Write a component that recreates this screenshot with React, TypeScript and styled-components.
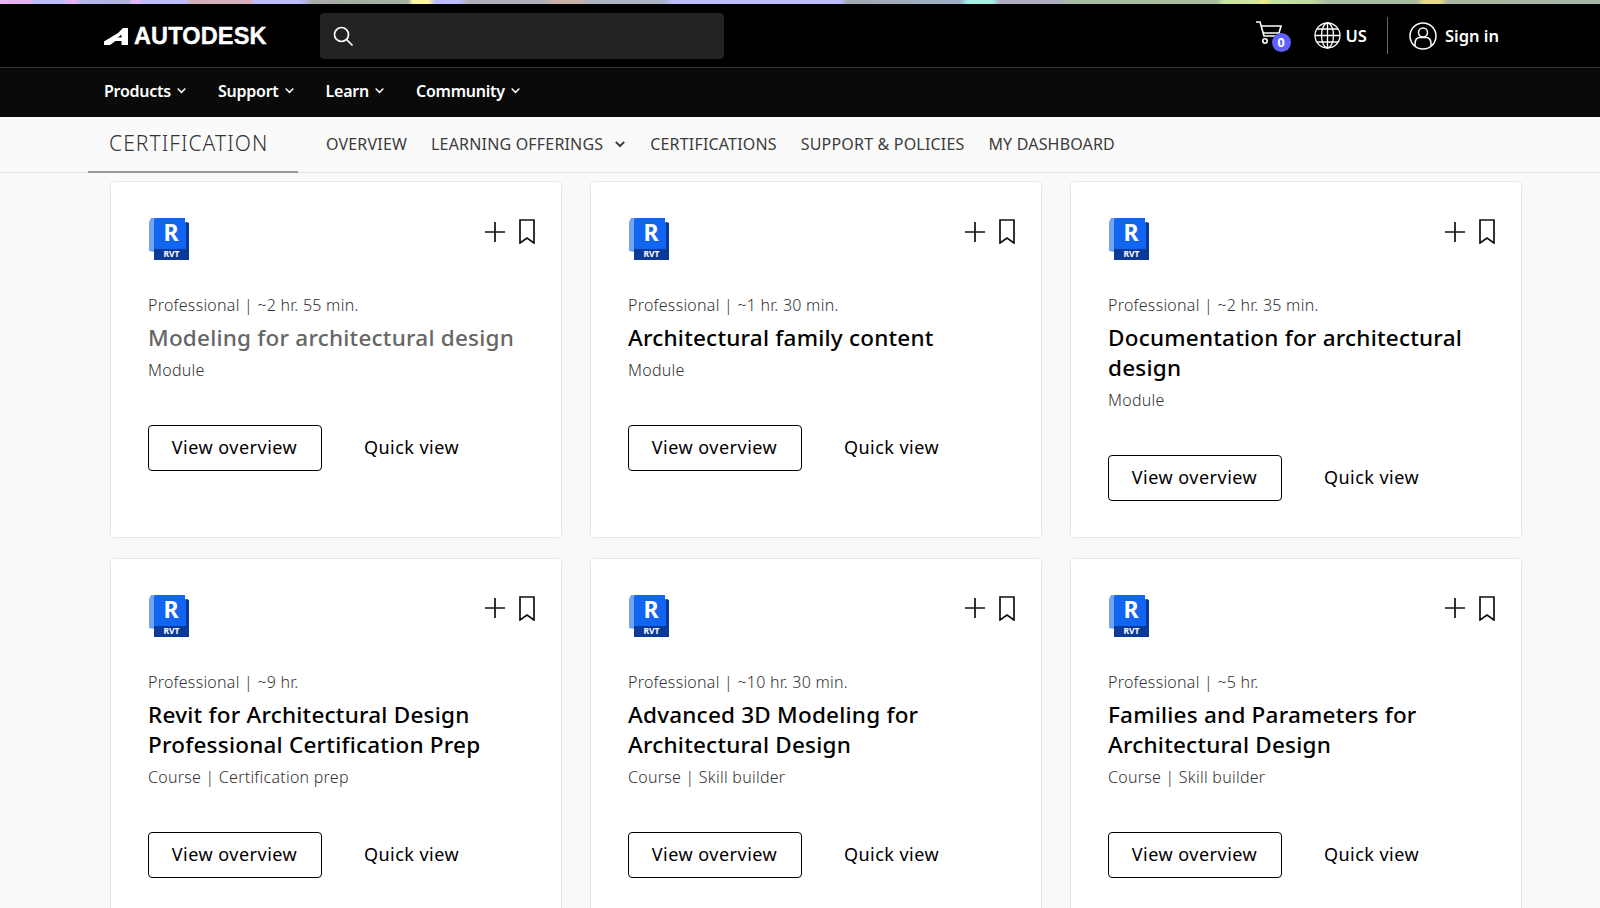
import React from "react";
import styled, { createGlobalStyle } from "styled-components";

const Global = createGlobalStyle`
  html, body { margin: 0; padding: 0; height: 908px; overflow: hidden; background: #f9f9f9; }
  body { font-family: "Noto Sans", "Liberation Sans", sans-serif; color: #000; }
  * { box-sizing: border-box; }
`;

const Strip = styled.div`
  height: 4px;
  background: linear-gradient(90deg,
    #e8b4f4 0%, #e4b4f6 1.9%, #bcbcff 2.2%, #bcbcff 4%, #e0b4f6 4.2%, #e0b4f6 4.8%,
    #b8b6ee 5.1%, #b4b2e0 8%, #e0b8f8 8.3%, #e0b8f8 8.6%, #c0bcff 9%, #c0bcff 11.5%,
    #d4b0b8 12%, #d8b0c0 15.6%, #bcbcff 16%, #bcbcff 18.8%, #a8aca8 19.5%, #a4b0a0 25.5%,
    #fff4a0 25.8%, #fff4a0 26.8%, #bcbcff 27.2%, #bcbcff 28.7%, #aeb0b8 29.2%, #aeb0b8 34%,
    #c8b0a8 34.4%, #c8b0a8 36%, #b0b4c0 37%, #a8b4c8 41.5%, #bcbcff 42%, #bcbcff 52.5%,
    #a4a8b0 53%, #9cb0c8 60%, #a8f0e4 60.5%, #a8f0e4 62%, #acaec0 62.5%, #acaec0 66%,
    #a8bca0 67%, #a8bc9c 76%, #c4e4a0 76.5%, #d8e898 78.7%, #f8e880 79%, #c4e4a0 79.5%,
    #c0d8a0 82%, #a8bca0 83%, #a8bca0 88.5%, #e8d888 89%, #e8d888 90%, #a8b8a0 90.5%, #a8b8a8 100%);
`;
const TopBar = styled.header`
  height: 64px;
  background: #000;
  border-bottom: 1px solid #333;
  display: flex;
  align-items: center;
  padding: 0 101px 0 104px;
`;
const Logo = styled.div`
  display: flex;
  align-items: center;
  gap: 6px;
  width: 216px;
  padding-top: 1px;
  color: #fff;
  font-family: "Liberation Sans", sans-serif;
  font-weight: 700;
  font-size: 23.5px;
  letter-spacing: 0.15px;
  -webkit-text-stroke: 0.4px #fff;
`;
const Search = styled.div`
  width: 404px;
  height: 46px;
  background: #222;
  border-radius: 4px;
  display: flex;
  align-items: center;
  padding-left: 12px;
`;
const Tools = styled.div`
  margin-left: auto;
  display: flex;
  align-items: center;
  color: #fff;
  font-weight: 600;
  font-size: 16.5px;
`;
const CartWrap = styled.div`
  position: relative;
  width: 36px;
  height: 32px;
  margin-right: 23px;
`;
const Badge = styled.span`
  position: absolute;
  right: 0;
  bottom: 0;
  width: 19px;
  height: 19px;
  border-radius: 50%;
  background: #5f60ff;
  color: #fff;
  font-size: 12.5px;
  font-weight: 700;
  line-height: 19px;
  text-align: center;
`;
const ToolItem = styled.div`
  display: flex;
  align-items: center;
  gap: 5px;
`;
const Divider = styled.div`
  width: 1px;
  height: 37px;
  background: #666;
  margin: 0 21px 0 20px;
`;
const SignIn = styled.span`
  margin-left: 3px;
`;
const MainNav = styled.nav`
  height: 49px;
  background: #0a0a0a;
  display: flex;
  align-items: center;
  gap: 31px;
  padding: 0 0 4px 104px;
  color: #fff;
  font-size: 16px;
  font-weight: 600;
`;
const NavItem = styled.div`
  display: flex;
  align-items: center;
  gap: 5px;
  letter-spacing: -0.25px;
`;
const SubNav = styled.nav`
  height: 56px;
  background: #fafafa;
  border-bottom: 1px solid #e3e3e3;
  display: flex;
  align-items: stretch;
  padding-left: 88px;
`;
const Brand = styled.div`
  width: 210px;
  height: 56px;
  border-bottom: 2px solid #999;
  display: flex;
  align-items: center;
  padding: 0 0 2px 21px;
  font-size: 21px;
  font-weight: 300;
  letter-spacing: 1.05px;
  color: #333;
`;
const SubLinks = styled.div`
  display: flex;
  align-items: center;
  gap: 24px;
  padding: 0 0 2px 28px;
  font-size: 16px;
  color: #3c3c3c;
`;
const SubLink = styled.span`
  display: flex;
  align-items: center;
  gap: 11px;
  letter-spacing: 0.18px;
`;
const Grid = styled.main`
  display: grid;
  grid-template-columns: repeat(3, 452px);
  column-gap: 28px;
  row-gap: 19.5px;
  padding: 8px 0 0 110px;
`;
const Card = styled.article`
  background: #fff;
  border: 1px solid #e6e6e6;
  border-radius: 4px;
  padding: 36px 26px 36px 37px;
`;
const CardTop = styled.div`
  display: flex;
  justify-content: space-between;
  align-items: flex-start;
  height: 42px;
  margin-bottom: 33px;
`;
const IconSlot = styled.div`
  margin-left: 1px;
  height: 42px;
  svg { display: block; overflow: visible; }
`;
const Actions = styled.div`
  display: flex;
  align-items: center;
  gap: 13px;
  padding-top: 1px;
`;
const Meta = styled.div`
  font-size: 16px;
  line-height: 24px;
  font-weight: 300;
  letter-spacing: 0.25px;
  color: #333;
`;
const Title = styled.h3<{ $muted?: boolean }>`
  margin: 6px 0 5px;
  font-size: 22.5px;
  line-height: 30px;
  font-weight: 500;
  letter-spacing: 0.22px;
  color: ${(p) => (p.$muted ? "#666" : "#000")};
`;
const ButtonRow = styled.div`
  display: flex;
  align-items: center;
  gap: 42.5px;
  margin: 43px 0 0 -0.5px;
`;
const Outline = styled.button`
  width: 174px;
  height: 46px;
  background: #fff;
  border: 1px solid #000;
  border-radius: 4px;
  font: 400 18px "Noto Sans", sans-serif;
  letter-spacing: 0.5px;
  color: #000;
  padding: 0 0 2px;
`;
const Quick = styled.span`
  font-size: 18px;
  letter-spacing: 0.45px;
  padding-bottom: 2px;
  color: #000;
`;

const Chevron = ({ size = 11, w = 1.3 }: { size?: number; w?: number }) => (
  <svg width={size} height={size} viewBox="0 0 10 10" fill="none" stroke="currentColor" strokeWidth={w}>
    <path d="M1.500 3.200l3.500 3.500 3.500-3.500" />
  </svg>
);

const RvtIcon = () => (
  <svg width="41" height="42" viewBox="0 0 41 42">
    <path d="M8 0H2L0 4v29l5 1V4z" fill="#73a5ef" />
    <path d="M5 2Q5 0 7 0h29v4l4 1v37H5v-9z" fill="#1265f2" />
    <path d="M37 4l3 1v37H6q-1 0-1-1v-10h32z" fill="#0b3a9a" />
    <text x="22" y="23" textAnchor="middle" fontFamily="Noto Sans" fontWeight="700" fontSize="23" fill="#fff">R</text>
    <text x="22.500" y="38.500" textAnchor="middle" fontFamily="Noto Sans" fontWeight="700" fontSize="8.500" fill="#fff">RVT</text>
  </svg>
);

const PlusIcon = () => (
  <svg width="22" height="22" viewBox="0 0 22 22" stroke="#111" strokeWidth="1.7">
    <path d="M1 11h20M11 1v20" />
  </svg>
);
const BookmarkIcon = () => (
  <svg width="16" height="25" viewBox="0 0 16 25" fill="none" stroke="#111" strokeWidth="1.7">
    <path d="M1 1h14v23l-7-5-7 5z" />
  </svg>
);

const cards = [
  { meta: "Professional | ~2 hr. 55 min.", title: ["Modeling for architectural design"], sub: "Module", muted: true },
  { meta: "Professional | ~1 hr. 30 min.", title: ["Architectural family content"], sub: "Module" },
  { meta: "Professional | ~2 hr. 35 min.", title: ["Documentation for architectural", "design"], sub: "Module" },
  { meta: "Professional | ~9 hr.", title: ["Revit for Architectural Design", "Professional Certification Prep"], sub: "Course | Certification prep" },
  { meta: "Professional | ~10 hr. 30 min.", title: ["Advanced 3D Modeling for", "Architectural Design"], sub: "Course | Skill builder" },
  { meta: "Professional | ~5 hr.", title: ["Families and Parameters for", "Architectural Design"], sub: "Course | Skill builder" },
];

export default function App() {
  return (
    <>
      <Global />
      <Strip />
      <TopBar>
        <Logo>
          <svg width="24" height="17" viewBox="0 0 24 17" fill="#fff">
            <path d="M0 17V13.500L14 5 19 0H24V17H17.500V13H11.500L6 17Z" />
            <path d="M17.500 6.500v3h-3.500z" fill="#000" />
          </svg>
          AUTODESK
        </Logo>
        <Search>
          <svg width="22" height="22" viewBox="0 0 22 22" fill="none" stroke="#fff" strokeWidth="1.7">
            <circle cx="9.500" cy="9.500" r="7" />
            <path d="M14.500 14.500L20.500 20.500" />
          </svg>
        </Search>
        <Tools>
          <CartWrap>
            <svg width="28" height="26" viewBox="0 0 28 26" fill="none" stroke="#fff" strokeWidth="1.6">
              <path d="M1 2h4l4 14h14" />
              <path d="M6 6h20l-2 7H8" />
              <circle cx="10" cy="21" r="2.200" />
            </svg>
            <Badge>0</Badge>
          </CartWrap>
          <ToolItem>
            <svg width="27" height="27" viewBox="0 0 27 27" fill="none" stroke="#fff" strokeWidth="1.3">
              <circle cx="13.500" cy="13.500" r="12.500" />
              <ellipse cx="13.500" cy="13.500" rx="6" ry="12.500" />
              <path d="M13.500 1v25M1 13.500h25M3 7h21M3 20h21" />
            </svg>
            US
          </ToolItem>
          <Divider />
          <ToolItem>
            <svg width="28" height="28" viewBox="0 0 28 28" fill="none" stroke="#fff" strokeWidth="1.5">
              <circle cx="14" cy="14" r="13" />
              <circle cx="14" cy="10.500" r="4.500" />
              <path d="M6 24v-2q0-6.500 5-6.500h6q5 0 5 6.500v2" />
            </svg>
            <SignIn>Sign in</SignIn>
          </ToolItem>
        </Tools>
      </TopBar>
      <MainNav>
        {["Products", "Support", "Learn", "Community"].map((n) => (
          <NavItem key={n}>
            {n}
            <Chevron />
          </NavItem>
        ))}
      </MainNav>
      <SubNav>
        <Brand>CERTIFICATION</Brand>
        <SubLinks>
          <SubLink>OVERVIEW</SubLink>
          <SubLink>
            LEARNING OFFERINGS
            <Chevron size={12} w={1.6} />
          </SubLink>
          <SubLink>CERTIFICATIONS</SubLink>
          <SubLink>SUPPORT &amp; POLICIES</SubLink>
          <SubLink>MY DASHBOARD</SubLink>
        </SubLinks>
      </SubNav>
      <Grid>
        {cards.map((c) => (
          <Card key={c.meta}>
            <CardTop>
              <IconSlot>
                <RvtIcon />
              </IconSlot>
              <Actions>
                <PlusIcon />
                <BookmarkIcon />
              </Actions>
            </CardTop>
            <Meta>{c.meta}</Meta>
            <Title $muted={c.muted}>
              {c.title.map((t) => (
                <div key={t}>{t}</div>
              ))}
            </Title>
            <Meta>{c.sub}</Meta>
            <ButtonRow>
              <Outline>View overview</Outline>
              <Quick>Quick view</Quick>
            </ButtonRow>
          </Card>
        ))}
      </Grid>
    </>
  );
}
